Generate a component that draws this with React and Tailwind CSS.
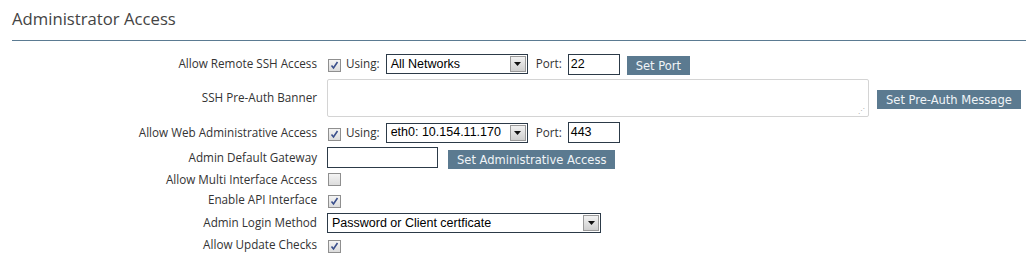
const Check = ({ checked }) => (
  <span className="inline-flex h-[13px] w-[13px] items-center justify-center border border-[#8f8f8f] bg-gradient-to-b from-[#f4f4f4] to-[#dcdcdc]">
    {checked && (
      <svg width="9" height="9" viewBox="0 0 9 9">
        <path d="M1.5 4.5 L3.5 7 L7.5 1" fill="none" stroke="#3a4f8c" strokeWidth="1.6" />
      </svg>
    )}
  </span>
);

const Select = ({ value, width }) => (
  <div className={`flex h-[20px] items-center border border-[#2c3a48] bg-white ${width}`}>
    <span className="flex-1 truncate pl-[4px] text-[12.5px] text-black font-['Liberation_Sans',sans-serif]">{value}</span>
    <span className="m-[1px] flex h-[16px] w-[16px] items-center justify-center border border-[#9a9a9a] bg-gradient-to-b from-[#f2f2f2] to-[#cfcfcf]">
      <svg width="7" height="4" viewBox="0 0 7 4">
        <path d="M0 0 H7 L3.5 4 Z" fill="#111" />
      </svg>
    </span>
  </div>
);

const TextBox = ({ value = '', width }) => (
  <div className={`flex h-[21px] items-center border border-[#2c3a48] bg-white pl-[2px] text-[12.5px] text-black font-['Liberation_Sans',sans-serif] ${width}`}>
    {value}
  </div>
);

const Btn = ({ children }) => (
  <span className="inline-flex h-[19px] items-center bg-[#5b7a90] px-[9px] text-[12.8px] text-[#f0f4f7] font-['DejaVu_Sans_Condensed','Liberation_Sans',sans-serif]">
    {children}
  </span>
);

const Row = ({ label, h, mt, children }) => (
  <div className={`flex items-center ${h} ${mt}`}>
    <div className="w-[317px] shrink-0 text-right text-[11.7px] text-[#333] font-['Open_Sans',sans-serif]">{label}</div>
    <div className="ml-[10px] flex items-center">{children}</div>
  </div>
);

const Small = ({ children, cls }) => (
  <span className={`text-[11.7px] text-[#333] font-['Open_Sans',sans-serif] ${cls}`}>{children}</span>
);

export default function App() {
  return (
    <div className="h-[257px] w-[1026px] overflow-hidden bg-white">
      <div className="ml-[12px] border-b border-[#5b7b92] pb-[9px] pt-[6px]">
        <h1 className="text-[16.7px] text-[#444] font-['Open_Sans',sans-serif]">Administrator Access</h1>
      </div>

      <Row label="Allow Remote SSH Access" h="h-[20px]" mt="mt-[13px]">
        <span className="ml-[1px]"><Check checked /></span>
        <Small cls="ml-[5px] mr-[6px]">Using:</Small>
        <Select value="All Networks" width="w-[142px]" />
        <Small cls="ml-[8px] mr-[6px]">Port:</Small>
        <TextBox value="22" width="w-[52px]" />
        <span className="ml-[7px]"><Btn>Set Port</Btn></span>
      </Row>

      <Row label="SSH Pre-Auth Banner" h="h-[38px]" mt="mt-[5px]">
        <div className="relative h-[38px] w-[542px] rounded-[2px] border border-[#d4d4d4] bg-white">
          <span className="absolute bottom-[2px] right-[3px] text-[7px] leading-none text-[#aaa]">⋰</span>
        </div>
        <span className="ml-[8px]"><Btn>Set Pre-Auth Message</Btn></span>
      </Row>

      <Row label="Allow Web Administrative Access" h="h-[21px]" mt="mt-[5px]">
        <span className="ml-[1px]"><Check checked /></span>
        <Small cls="ml-[5px] mr-[6px]">Using:</Small>
        <Select value="eth0: 10.154.11.170" width="w-[142px]" />
        <Small cls="ml-[8px] mr-[6px]">Port:</Small>
        <TextBox value="443" width="w-[52px]" />
      </Row>

      <Row label="Admin Default Gateway" h="h-[21px]" mt="mt-[4px]">
        <TextBox width="w-[111px]" />
        <span className="ml-[10px]"><Btn>Set Administrative Access</Btn></span>
      </Row>

      <Row label="Allow Multi Interface Access" h="h-[20px]" mt="mt-[2px]">
        <span className="ml-[1px]"><Check /></span>
      </Row>

      <Row label="Enable API Interface" h="h-[20px]" mt="mt-0">
        <span className="ml-[1px]"><Check checked /></span>
      </Row>

      <Row label="Admin Login Method" h="h-[20px]" mt="mt-[3px]">
        <Select value="Password or Client certficate" width="w-[274px]" />
      </Row>

      <Row label="Allow Update Checks" h="h-[20px]" mt="mt-[2px]">
        <span className="ml-[1px]"><Check checked /></span>
      </Row>
    </div>
  );
}
